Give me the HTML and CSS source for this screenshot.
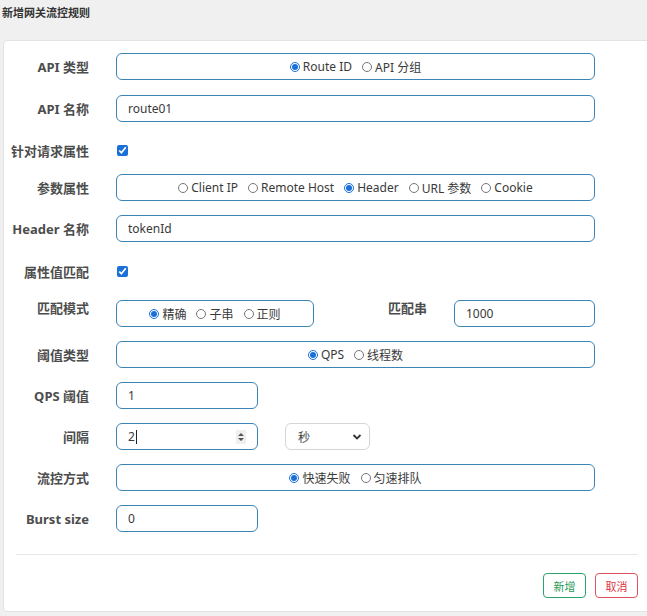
FILE: index.html
```html
<!DOCTYPE html>
<html lang="zh">
<head>
<meta charset="utf-8">
<title>新增网关流控规则</title>
<link rel="stylesheet" href="styles.css">
</head>
<body>
<div class="header"><span class="title">新增网关流控规则</span></div>
<div class="card">
  <div class="form">
    <div class="row">
      <div class="label">API 类型</div>
      <div class="box radios">
        <label class="opt"><input type="radio" name="t" checked>Route ID</label>
        <label class="opt"><input type="radio" name="t">API 分组</label>
      </div>
    </div>
    <div class="row">
      <div class="label">API 名称</div>
      <div class="box text">route01</div>
    </div>
    <div class="row check-row first-check">
      <div class="label">针对请求属性</div>
      <input class="check" type="checkbox" checked>
    </div>
    <div class="row">
      <div class="label">参数属性</div>
      <div class="box radios">
        <label class="opt"><input type="radio" name="p">Client IP</label>
        <label class="opt"><input type="radio" name="p">Remote Host</label>
        <label class="opt"><input type="radio" name="p" checked>Header</label>
        <label class="opt"><input type="radio" name="p">URL 参数</label>
        <label class="opt"><input type="radio" name="p">Cookie</label>
      </div>
    </div>
    <div class="row">
      <div class="label">Header 名称</div>
      <div class="box text">tokenId</div>
    </div>
    <div class="row check-row second-check">
      <div class="label">属性值匹配</div>
      <input class="check" type="checkbox" checked>
    </div>
    <div class="row top-label">
      <div class="label">匹配模式</div>
      <div class="box radios mode">
        <label class="opt"><input type="radio" name="m" checked>精确</label>
        <label class="opt"><input type="radio" name="m">子串</label>
        <label class="opt"><input type="radio" name="m">正则</label>
      </div>
      <div class="label label2">匹配串</div>
      <div class="box text flex1">1000</div>
    </div>
    <div class="row">
      <div class="label">阈值类型</div>
      <div class="box radios">
        <label class="opt"><input type="radio" name="q" checked>QPS</label>
        <label class="opt"><input type="radio" name="q">线程数</label>
      </div>
    </div>
    <div class="row">
      <div class="label">QPS 阈值</div>
      <div class="box text small">1</div>
    </div>
    <div class="row">
      <div class="label">间隔</div>
      <div class="box text small number">
        <span class="val">2<span class="caret"></span></span>
        <span class="spin">
          <svg width="8" height="10" viewBox="0 0 8 10"><path d="M1 4 L4 1 L7 4 Z M1 6 L4 9 L7 6 Z" fill="#555"/></svg>
        </span>
      </div>
      <div class="select">
        <span>秒</span>
        <svg width="10" height="8" viewBox="0 0 10 8"><path d="M1.5 2 L5 5.5 L8.5 2" fill="none" stroke="#333" stroke-width="1.8"/></svg>
      </div>
    </div>
    <div class="row">
      <div class="label">流控方式</div>
      <div class="box radios">
        <label class="opt"><input type="radio" name="f" checked>快速失败</label>
        <label class="opt"><input type="radio" name="f">匀速排队</label>
      </div>
    </div>
    <div class="row">
      <div class="label">Burst size</div>
      <div class="box text small">0</div>
    </div>
  </div>
  <div class="footer">
    <div class="divider"></div>
    <div class="buttons">
      <button class="btn btn-add">新增</button>
      <button class="btn btn-cancel">取消</button>
    </div>
  </div>
</div>
</body>
</html>
```
FILE: styles.css
```css
html, body {
  margin: 0;
  padding: 0;
}
body {
  background: #f0f0f0;
  font-family: "Noto Sans", "Noto Sans CJK SC", sans-serif;
  font-size: 12px;
  color: #333;
  overflow: hidden;
  width: 647px;
  height: 616px;
}
.header {
  height: 40px;
  box-sizing: border-box;
  padding: 4px 0 0 2px;
}
.title {
  font-size: 11px;
  font-weight: bold;
  color: #333;
  font-family: "Noto Sans CJK SC", sans-serif;
}
.card {
  margin-left: 3px;
  width: 648px;
  height: 572px;
  box-sizing: border-box;
  background: #fff;
  border: 1px solid #e3e3e3;
  border-radius: 4px;
  padding-top: 12px;
}
.form {
  width: 591px;
  display: flex;
  flex-direction: column;
  gap: 14px;
}
.row {
  display: flex;
  align-items: center;
  gap: 27px;
  height: 27px;
}
.row:nth-child(2) {
  margin-top: 1px;
}
.label {
  width: 85px;
  flex: none;
  text-align: right;
  font-size: 13px;
  font-weight: bold;
  color: #4d4d4d;
  white-space: nowrap;
}
.check-row.first-check {
  box-sizing: border-box;
  height: 24px;
  padding-top: 4px;
}
.check-row.second-check {
  height: 30px;
}
.check {
  width: 11px;
  height: 11px;
  margin: 0 0 0 1px;
  accent-color: #1a6fd8;
}
.top-label .label {
  align-self: flex-start;
  line-height: 16px;
}
.box {
  box-sizing: border-box;
  height: 27px;
  border: 1px solid #3b84b6;
  border-radius: 6px;
  background: #fff;
  flex: 1;
}
.box.text {
  display: flex;
  align-items: center;
  padding-left: 11px;
  font-size: 12px;
  color: #3a3a3a;
}
.box.small {
  flex: none;
  width: 142px;
}
.box.flex1 {
  flex: 1;
}
.box.mode {
  flex: none;
  width: 198px;
}
.label2 {
  width: 86px;
}
.radios {
  display: flex;
  align-items: center;
  justify-content: center;
  gap: 10px;
}
.opt {
  display: flex;
  align-items: center;
  gap: 3px;
  font-size: 12px;
  color: #3a3a3a;
  white-space: nowrap;
}
.opt input {
  width: 10px;
  height: 10px;
  margin: 0;
  accent-color: #1a6fd8;
}
.number {
  justify-content: space-between;
  padding-right: 11px;
}
.val {
  display: flex;
  align-items: center;
}
.caret {
  display: inline-block;
  width: 1px;
  height: 14px;
  background: #222;
  margin-left: 1px;
}
.spin {
  display: flex;
  align-items: center;
  justify-content: center;
  width: 10px;
  height: 14px;
  background: #efefef;
}
.select {
  box-sizing: border-box;
  width: 85px;
  height: 27px;
  border: 1px solid #d6d6d6;
  border-radius: 6px;
  display: flex;
  align-items: center;
  justify-content: space-between;
  padding: 0 7px 0 12px;
  font-size: 12px;
  color: #444;
}
.footer {
  margin: 22px 12px 0 12px;
}
.divider {
  height: 1px;
  background: #e6e6e6;
}
.buttons {
  display: flex;
  justify-content: flex-end;
  gap: 9px;
  margin-top: 18px;
}
.btn {
  box-sizing: border-box;
  width: 43px;
  height: 25px;
  background: #fff;
  border-radius: 4px;
  font-family: "Noto Sans CJK SC", sans-serif;
  font-size: 11px;
  padding: 0;
  cursor: pointer;
}
.btn-add {
  border: 1px solid #2aa46a;
  color: #1f9a55;
}
.btn-cancel {
  border: 1px solid #e0525e;
  color: #dc3545;
}
```
